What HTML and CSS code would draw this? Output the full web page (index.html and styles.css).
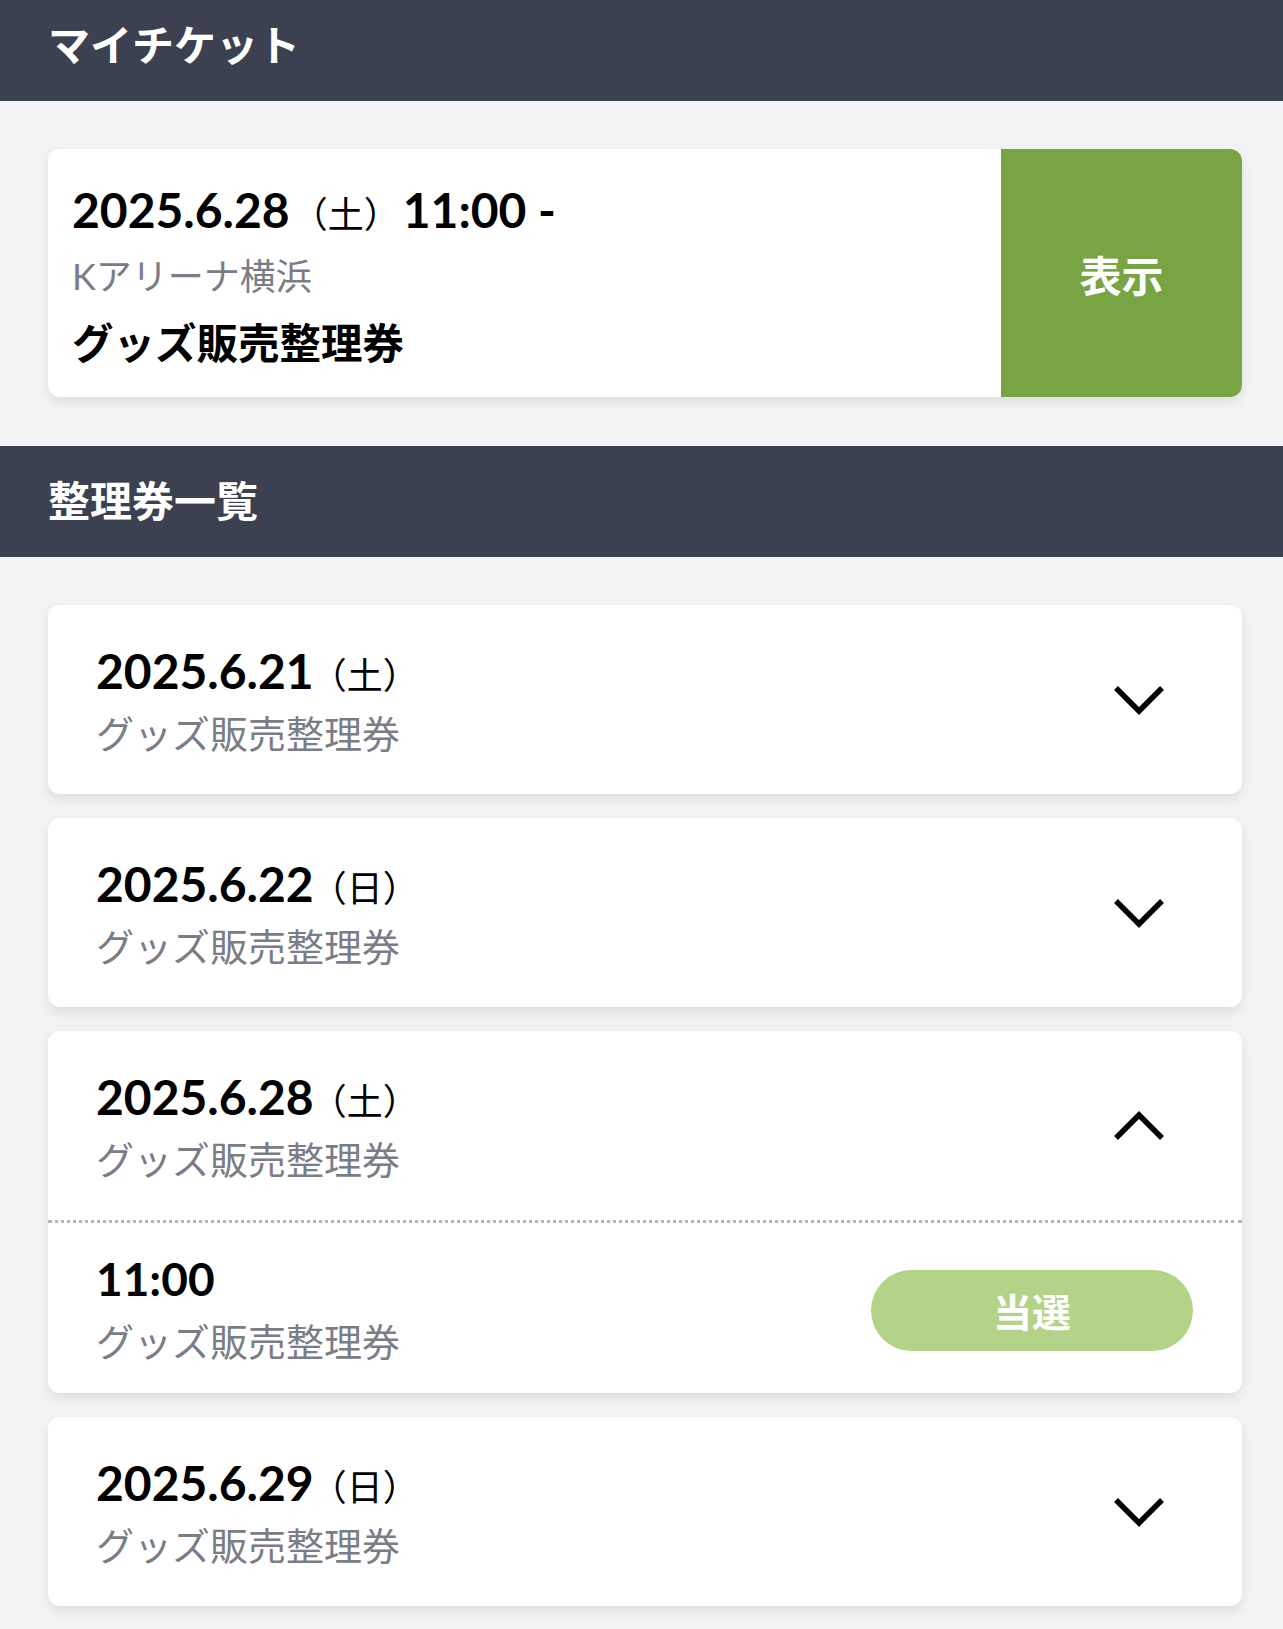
FILE: index.html
```html
<!DOCTYPE html>
<html lang="ja">
<head>
<meta charset="utf-8">
<title>マイチケット</title>
<link rel="stylesheet" href="styles.css">
</head>
<body>
<header class="section-title section-title--first">マイチケット</header>
<section class="my-ticket-area">
  <div class="ticket-card">
    <div class="ticket-info">
      <div class="ticket-datetime"><span class="date">2025.6.28</span><span class="dow">（土）</span><span class="date">11:00 -</span></div>
      <div class="venue">Kアリーナ横浜</div>
      <div class="ticket-name">グッズ販売整理券</div>
    </div>
    <div class="show-button">表示</div>
  </div>
</section>
<header class="section-title">整理券一覧</header>
<section class="ticket-list">
  <div class="list-card">
    <div class="list-head">
      <div class="list-text">
        <div class="list-date"><span class="date">2025.6.21</span><span class="dow">（土）</span></div>
        <div class="list-sub">グッズ販売整理券</div>
      </div>
      <svg class="chevron" viewBox="0 0 56 34" width="56" height="34"><polyline points="5,5 28,28 51,5" fill="none" stroke="#000" stroke-width="5.5" stroke-linecap="butt" stroke-linejoin="miter"/></svg>
    </div>
  </div>
  <div class="list-card">
    <div class="list-head">
      <div class="list-text">
        <div class="list-date"><span class="date">2025.6.22</span><span class="dow">（日）</span></div>
        <div class="list-sub">グッズ販売整理券</div>
      </div>
      <svg class="chevron" viewBox="0 0 56 34" width="56" height="34"><polyline points="5,5 28,28 51,5" fill="none" stroke="#000" stroke-width="5.5" stroke-linecap="butt" stroke-linejoin="miter"/></svg>
    </div>
  </div>
  <div class="list-card">
    <div class="list-head">
      <div class="list-text">
        <div class="list-date"><span class="date">2025.6.28</span><span class="dow">（土）</span></div>
        <div class="list-sub">グッズ販売整理券</div>
      </div>
      <svg class="chevron" viewBox="0 0 56 34" width="56" height="34"><polyline points="5,29 28,6 51,29" fill="none" stroke="#000" stroke-width="5.5" stroke-linecap="butt" stroke-linejoin="miter"/></svg>
    </div>
    <div class="list-slot">
      <div class="list-text">
        <div class="list-date"><span class="date date--slot">11:00</span></div>
        <div class="list-sub">グッズ販売整理券</div>
      </div>
      <div class="win-badge">当選</div>
    </div>
  </div>
  <div class="list-card">
    <div class="list-head">
      <div class="list-text">
        <div class="list-date"><span class="date">2025.6.29</span><span class="dow">（日）</span></div>
        <div class="list-sub">グッズ販売整理券</div>
      </div>
      <svg class="chevron" viewBox="0 0 56 34" width="56" height="34"><polyline points="5,5 28,28 51,5" fill="none" stroke="#000" stroke-width="5.5" stroke-linecap="butt" stroke-linejoin="miter"/></svg>
    </div>
  </div>
</section>
</body>
</html>
```

FILE: styles.css
```css
* { box-sizing: border-box; }
html, body { margin: 0; padding: 0; }
body {
  background: #f2f3f5;
  font-family: "Lato", "Noto Sans CJK JP", sans-serif;
  color: #000;
}
.section-title {
  background: #3b4150;
  color: #fff;
  font-size: 42px;
  font-weight: 700;
  height: 111px;
  line-height: 111px;
  padding: 0 48px;
}
.section-title--first {
  height: 101px;
  line-height: 91px;
}
.my-ticket-area {
  padding: 48px 41px 49px 48px;
}
.ticket-card {
  display: flex;
  height: 248px;
  background: #fff;
  border-radius: 12px;
  overflow: hidden;
  box-shadow: 0 5px 12px rgba(0, 0, 0, 0.09);
}
.ticket-info {
  flex: 1;
  padding: 27px 24px 20px;
}
.ticket-datetime, .venue, .ticket-name {
  line-height: 67px;
  height: 67px;
  white-space: nowrap;
}
.date {
  font-size: 48px;
  font-weight: 700;
}
.date--slot {
  font-size: 46px;
}
.dow {
  font-size: 36px;
  font-weight: 400;
  margin: 0 3px 0 2px;
}
.venue {
  font-size: 36px;
  color: #7a7d85;
}
.ticket-name {
  font-size: 41.5px;
  font-weight: 700;
}
.show-button {
  width: 241px;
  background: #78a444;
  color: #fff;
  font-size: 42px;
  font-weight: 700;
  display: flex;
  align-items: center;
  justify-content: center;
}
.ticket-list {
  padding: 48px 41px 23px 48px;
  display: flex;
  flex-direction: column;
  gap: 24px;
}
.list-card {
  background: #fff;
  border-radius: 12px;
  box-shadow: 0 5px 12px rgba(0, 0, 0, 0.09);
}
.list-head {
  display: flex;
  align-items: center;
  justify-content: space-between;
  padding: 34px 75px 29px 48px;
}
.list-head .dow {
  margin-left: -3px;
}
.list-date, .list-sub {
  height: 63px;
  line-height: 63px;
  white-space: nowrap;
}
.list-sub {
  font-size: 38px;
  color: #7a7d85;
}
.chevron {
  display: block;
  margin-right: 0;
  margin-top: -4px;
}
.list-slot {
  display: flex;
  align-items: center;
  justify-content: space-between;
  border-top: 3px dotted #b5b5b5;
  padding: 24px 49px 20px 48px;
}
.win-badge {
  width: 322px;
  height: 81px;
  border-radius: 41px;
  background: #b2d388;
  color: #fff;
  font-size: 39px;
  font-weight: 700;
  display: flex;
  align-items: center;
  justify-content: center;
}
```
